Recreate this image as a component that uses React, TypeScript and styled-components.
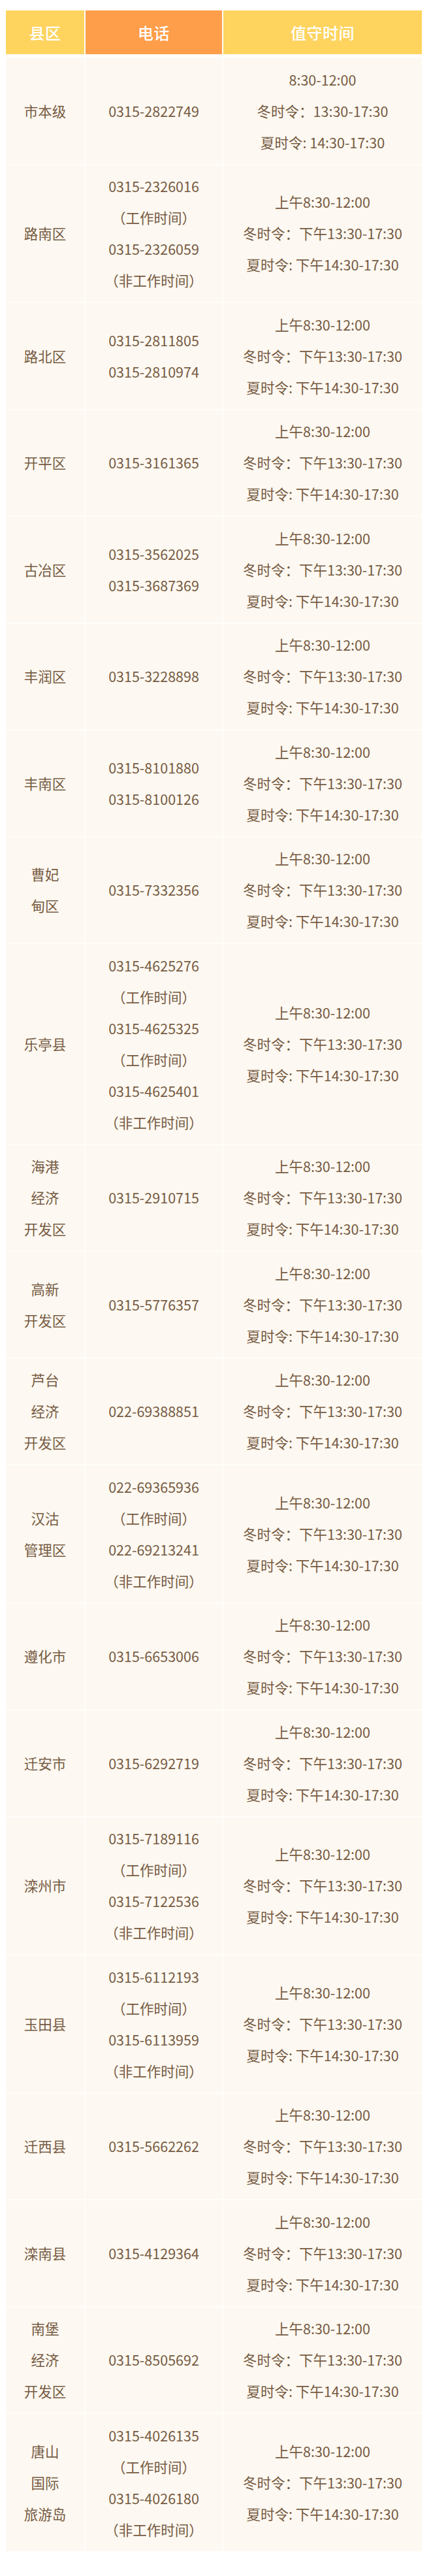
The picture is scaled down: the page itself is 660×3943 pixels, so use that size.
import React from "react";
import styled, { createGlobalStyle } from "styled-components";

const GlobalStyle = createGlobalStyle`
  html, body {
    margin: 0;
    padding: 0;
    background: #ffffff;
  }
  body {
    font-family: "Noto Sans CJK SC", "Noto Sans", sans-serif;
  }
`;

const Page = styled.div`
  padding: 16px 14px 38px 9px;
  background: #ffffff;
`;

const Table = styled.div`
  display: grid;
  grid-template-columns: 120px 209px 304px;
  column-gap: 2px;
  row-gap: 2px;
  width: 637px;
  background: #fffdfa;
`;

const HeaderCell = styled.div<{ $tone: "yellow" | "orange" }>`
  height: 67px;
  margin-bottom: 4px;
  display: flex;
  align-items: center;
  justify-content: center;
  background: ${(p) => (p.$tone === "orange" ? "#FE9E4B" : "#FED45F")};
  color: #ffffff;
  font-size: 24px;
  font-weight: 500;
  letter-spacing: 0.5px;
`;

const BodyCell = styled.div`
  display: flex;
  flex-direction: column;
  align-items: center;
  justify-content: center;
  padding: 8.75px 0;
  background: #FDF8F1;
  color: #765B43;
  font-size: 21.5px;
  text-align: center;
`;

const Line = styled.div`
  line-height: 48px;
  height: 48px;
  white-space: nowrap;
`;

type Row = { name: string[]; phones: string[]; times: string[] };

const STD = ["上午8:30-12:00", "冬时令：下午13:30-17:30", "夏时令: 下午14:30-17:30"];
const WORK = "（工作时间）";
const OFF = "（非工作时间）";

const rows: Row[] = [
  { name: ["市本级"], phones: ["0315-2822749"], times: ["8:30-12:00", "冬时令：13:30-17:30", "夏时令: 14:30-17:30"] },
  { name: ["路南区"], phones: ["0315-2326016", WORK, "0315-2326059", OFF], times: STD },
  { name: ["路北区"], phones: ["0315-2811805", "0315-2810974"], times: STD },
  { name: ["开平区"], phones: ["0315-3161365"], times: STD },
  { name: ["古冶区"], phones: ["0315-3562025", "0315-3687369"], times: STD },
  { name: ["丰润区"], phones: ["0315-3228898"], times: STD },
  { name: ["丰南区"], phones: ["0315-8101880", "0315-8100126"], times: STD },
  { name: ["曹妃", "甸区"], phones: ["0315-7332356"], times: STD },
  { name: ["乐亭县"], phones: ["0315-4625276", WORK, "0315-4625325", WORK, "0315-4625401", OFF], times: STD },
  { name: ["海港", "经济", "开发区"], phones: ["0315-2910715"], times: STD },
  { name: ["高新", "开发区"], phones: ["0315-5776357"], times: STD },
  { name: ["芦台", "经济", "开发区"], phones: ["022-69388851"], times: STD },
  { name: ["汉沽", "管理区"], phones: ["022-69365936", WORK, "022-69213241", OFF], times: STD },
  { name: ["遵化市"], phones: ["0315-6653006"], times: STD },
  { name: ["迁安市"], phones: ["0315-6292719"], times: STD },
  { name: ["滦州市"], phones: ["0315-7189116", WORK, "0315-7122536", OFF], times: STD },
  { name: ["玉田县"], phones: ["0315-6112193", WORK, "0315-6113959", OFF], times: STD },
  { name: ["迁西县"], phones: ["0315-5662262"], times: STD },
  { name: ["滦南县"], phones: ["0315-4129364"], times: STD },
  { name: ["南堡", "经济", "开发区"], phones: ["0315-8505692"], times: STD },
  { name: ["唐山", "国际", "旅游岛"], phones: ["0315-4026135", WORK, "0315-4026180", OFF], times: STD },
];

const Lines = ({ items }: { items: string[] }) => (
  <>
    {items.map((t, i) => (
      <Line key={i}>{t}</Line>
    ))}
  </>
);

export default function App() {
  return (
    <>
      <GlobalStyle />
      <Page>
        <Table>
          <HeaderCell $tone="yellow">县区</HeaderCell>
          <HeaderCell $tone="orange">电话</HeaderCell>
          <HeaderCell $tone="yellow">值守时间</HeaderCell>
          {rows.map((r, i) => (
            <React.Fragment key={i}>
              <BodyCell>
                <Lines items={r.name} />
              </BodyCell>
              <BodyCell>
                <Lines items={r.phones} />
              </BodyCell>
              <BodyCell>
                <Lines items={r.times} />
              </BodyCell>
            </React.Fragment>
          ))}
        </Table>
      </Page>
    </>
  );
}
